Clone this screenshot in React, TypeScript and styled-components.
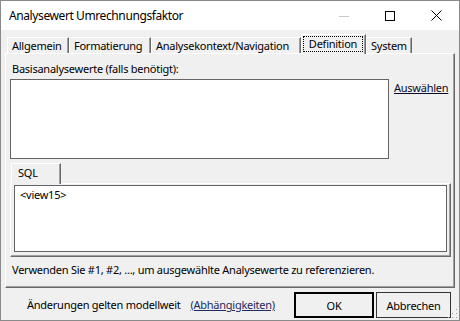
import React from "react";
import styled, { createGlobalStyle } from "styled-components";

const GlobalStyle = createGlobalStyle`
  html, body {
    margin: 0;
    padding: 0;
    background: #ffffff;
  }
  * {
    box-sizing: border-box;
  }
`;

const FONT = `"Noto Sans", "Open Sans", sans-serif`;

const Window = styled.div`
  position: relative;
  width: 460px;
  height: 321px;
  border: 1px solid #8a8a8a;
  display: flex;
  flex-direction: column;
  font-family: ${FONT};
  font-size: 11px;
  letter-spacing: -0.25px;
  color: #000;
  background: #f0f0f0;
`;

const TitleBar = styled.div`
  height: 29px;
  flex: none;
  display: flex;
  align-items: center;
  background: #ffffff;
`;

const Title = styled.div`
  flex: 1;
  padding-left: 8px;
  font-size: 12px;
  letter-spacing: -0.4px;
  line-height: 16px;
`;

const CaptionButton = styled.div`
  width: 46px;
  height: 29px;
  display: flex;
  align-items: center;
  justify-content: center;
`;

const Body = styled.div`
  flex: 1;
  display: flex;
  flex-direction: column;
  padding: 0 4px;
`;

const TabStrip = styled.div`
  height: 23px;
  flex: none;
  display: flex;
  align-items: flex-end;
  padding-left: 2px;
`;

const Tab = styled.div<{ $w: number; $active?: boolean }>`
  position: relative;
  width: ${(p) => p.$w}px;
  height: ${(p) => (p.$active ? 20 : 16)}px;
  margin-bottom: ${(p) => (p.$active ? -1 : 0)}px;
  z-index: ${(p) => (p.$active ? 2 : 1)};
  background: #f0f0f0;
  border-top: 1px solid #ffffff;
  border-left: 1px solid #ffffff;
  border-right: 1px solid #696969;
  box-shadow: inset -1px 0 0 #a0a0a0;
  display: flex;
  align-items: ${(p) => (p.$active ? "flex-start" : "center")};
  padding: ${(p) => (p.$active ? "1px 2px 0 1px" : "0 0 0 4px")};
  line-height: 14px;
  white-space: nowrap;
`;

const FocusLabel = styled.span`
  flex: 1;
  height: 16px;
  border: 1px dotted #000;
  display: flex;
  align-items: center;
  justify-content: center;
`;

const Panel = styled.div`
  height: 235px;
  flex: none;
  display: flex;
  flex-direction: column;
  border-top: 1px solid #ffffff;
  border-left: 1px solid #ffffff;
  border-right: 1px solid #696969;
  border-bottom: 1px solid #696969;
  box-shadow: inset -1px -1px 0 #a0a0a0;
  padding: 7px 4px 0 4px;
`;

const Label = styled.div`
  margin-left: 2px;
  line-height: 15px;
`;

const Row = styled.div`
  display: flex;
  margin-top: 3px;
`;

const ListBox = styled.div`
  width: 379px;
  height: 80px;
  background: #ffffff;
  border: 1px solid #646464;
`;

const Link = styled.span<{ $blue?: boolean }>`
  text-decoration: underline;
  color: ${(p) => (p.$blue ? "#1c2a60" : "#0a0a2a")};
  line-height: 15px;
  cursor: pointer;
`;

const SideLink = styled.div`
  margin-left: 5px;
  margin-top: 1px;
`;

const SqlTabs = styled.div`
  display: flex;
  margin-top: 4px;
  padding-left: 1px;
`;

const SqlTab = styled.div`
  width: 50px;
  height: 21px;
  margin-bottom: -1px;
  position: relative;
  z-index: 2;
  background: #f0f0f0;
  border-top: 1px solid #ffffff;
  border-left: 1px solid #ffffff;
  border-right: 1px solid #696969;
  box-shadow: inset -1px 0 0 #a0a0a0;
  padding: 2px 0 0 6px;
  line-height: 14px;
`;

const SqlFrame = styled.div`
  width: 441px;
  height: 74px;
  display: flex;
  border-top: 1px solid #ffffff;
  border-left: 1px solid #ffffff;
  border-right: 1px solid #696969;
  border-bottom: 1px solid #696969;
  box-shadow: inset -1px -1px 0 #a0a0a0;
  padding: 1px 3px 4px 3px;
`;

const SqlEditor = styled.div`
  flex: 1;
  background: #ffffff;
  border: 1px solid #646464;
  padding: 1px 5px;
  line-height: 15px;
`;

const Hint = styled.div`
  margin-top: 5px;
  margin-left: 2px;
  line-height: 15px;
`;

const Footer = styled.div`
  flex: 1;
  display: flex;
  align-items: flex-start;
  padding: 4px 4px 0 22px;
`;

const FooterText = styled.div`
  margin-top: 5px;
  line-height: 15px;
  white-space: nowrap;
  display: flex;
  gap: 10px;
`;

const Buttons = styled.div`
  margin-left: auto;
  display: flex;
  gap: 2px;
`;

const Button = styled.div<{ $w: number; $default?: boolean }>`
  width: ${(p) => p.$w}px;
  height: 26px;
  display: flex;
  align-items: center;
  justify-content: center;
  background: #f0f0f0;
  border: ${(p) => (p.$default ? "2px solid #000" : "1px solid #333")};
`;

const Grip = styled.svg`
  position: absolute;
  right: 1px;
  bottom: 1px;
`;

const tabs = [
  { label: "Allgemein", w: 62 },
  { label: "Formatierung", w: 82 },
  { label: "Analysekontext/Navigation", w: 150 },
  { label: "Definition", w: 65, active: true },
  { label: "System", w: 46 },
];

export default function App() {
  return (
    <>
      <GlobalStyle />
      <Window>
        <TitleBar>
          <Title>Analysewert Umrechnungsfaktor</Title>
          <CaptionButton>
            <svg width="10" height="10" viewBox="0 0 10 10">
              <line x1="0" y1="5.5" x2="10" y2="5.5" stroke="#c8c8c8" strokeWidth="1" />
            </svg>
          </CaptionButton>
          <CaptionButton>
            <svg width="10" height="10" viewBox="0 0 10 10">
              <rect x="0.5" y="0.5" width="9" height="9" fill="none" stroke="#000" strokeWidth="1" />
            </svg>
          </CaptionButton>
          <CaptionButton>
            <svg width="11" height="11" viewBox="0 0 11 11">
              <path d="M0.5 0.5 L10.5 10.5 M10.5 0.5 L0.5 10.5" stroke="#000" strokeWidth="1" />
            </svg>
          </CaptionButton>
        </TitleBar>
        <Body>
          <TabStrip>
            {tabs.map((t) => (
              <Tab key={t.label} $w={t.w} $active={t.active}>
                {t.active ? <FocusLabel>{t.label}</FocusLabel> : t.label}
              </Tab>
            ))}
          </TabStrip>
          <Panel>
            <Label>Basisanalysewerte (falls benötigt):</Label>
            <Row>
              <ListBox />
              <SideLink>
                <Link>Auswählen</Link>
              </SideLink>
            </Row>
            <SqlTabs>
              <SqlTab>SQL</SqlTab>
            </SqlTabs>
            <SqlFrame>
              <SqlEditor>&lt;view15&gt;</SqlEditor>
            </SqlFrame>
            <Hint>Verwenden Sie #1, #2, ..., um ausgewählte Analysewerte zu referenzieren.</Hint>
          </Panel>
          <Footer>
            <FooterText>
              <span>Änderungen gelten modellweit</span>
              <Link $blue>(Abhängigkeiten)</Link>
            </FooterText>
            <Buttons>
              <Button $w={80} $default>OK</Button>
              <Button $w={75}>Abbrechen</Button>
            </Buttons>
          </Footer>
        </Body>
        <Grip width="12" height="12" viewBox="0 0 12 12">
          {[
            [10, 2], [10, 6], [10, 10], [6, 6], [6, 10], [2, 10],
          ].map(([x, y]) => (
            <g key={`${x}-${y}`}>
              <rect x={x} y={y} width="1" height="1" fill="#a0a0a0" />
              <rect x={x - 1} y={y - 1} width="1" height="1" fill="#ffffff" />
            </g>
          ))}
        </Grip>
      </Window>
    </>
  );
}
